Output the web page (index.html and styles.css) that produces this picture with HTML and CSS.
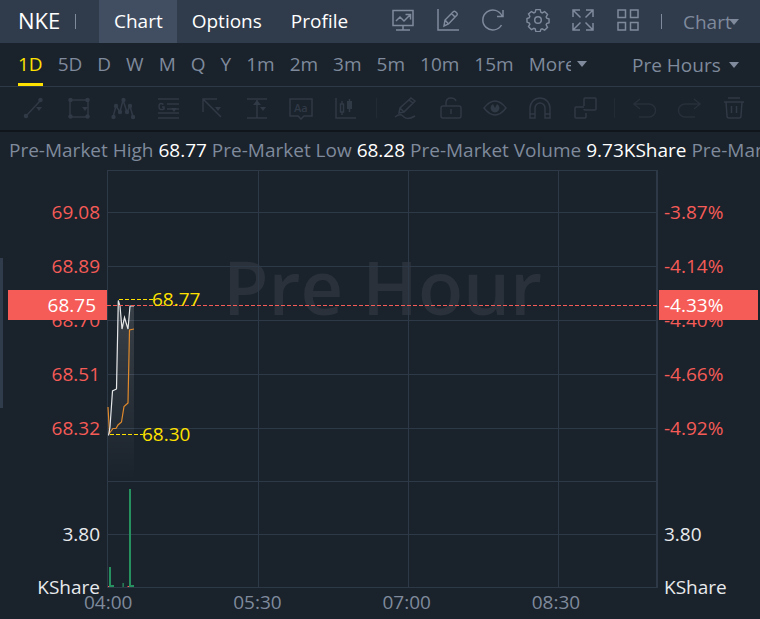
FILE: index.html
```html
<!DOCTYPE html>
<html lang="en">
<head>
  <meta charset="UTF-8">
  <meta name="viewport" content="width=device-width, initial-scale=1.0">
  <title>NKE Chart</title>
  <link rel="stylesheet" href="styles.css">
</head>
<body>
  <header class="header">
    <h1 class="symbol">NKE</h1>
    <span class="divider"></span>
    <nav class="tabs">
      <a class="tab active" href="#chart">Chart</a>
      <a class="tab" href="#options">Options</a>
      <a class="tab" href="#profile">Profile</a>
    </nav>
    <div class="actions">
      <button class="icon-btn" aria-label="Indicators">
        <svg viewBox="0 0 24 24"><path d="M2 2.500h20v15h-20zM12 17.500v4.500M5 22h14M5 13l4-4 4 4 6-6M14.500 6.500h5v5"/></svg>
      </button>
      <button class="icon-btn" aria-label="Draw">
        <svg viewBox="0 0 24 24"><path d="M2 1v21h21M8 18l1-6 8.500-8.500q1-.7 2 .2l1.300 1.300q1 1 .2 2L12.500 16zM9 12l3.500 4M15.500 5.500l3.500 3.500"/></svg>
      </button>
      <button class="icon-btn" aria-label="Refresh">
        <svg viewBox="0 0 24 24"><path d="M20.500 17A10 10 0 1 1 21 8M22 2v6.500h-6"/></svg>
      </button>
      <button class="icon-btn" aria-label="Settings">
        <svg viewBox="0 0 24 24"><path d="M9.800 2h4.400l.8 2.800 1.300.6 2.600-1.400 3 3-1.400 2.600.6 1.400 2.400.8v3.800l-2.400.9-.6 1.300 1.400 2.600-3 3-2.600-1.400-1.300.6-.8 2.400H9.800L9 22l-1.300-.6L5.100 22.800l-3-3 1.400-2.600-.6-1.300-2.400-.9v-3.800l2.400-.8.6-1.400L2.100 6.500l3-2.500 2.600 1.400L9 4.800z" transform="translate(.5 -.3) scale(.96)"/><circle cx="12" cy="12" r="3.300"/></svg>
      </button>
      <button class="icon-btn" aria-label="Full screen">
        <svg viewBox="0 0 24 24"><path d="M2 9V2h7M2.500 2.500l7 7M15 2h7v7M21.500 2.500l-7 7M2 15v7h7M2.500 21.500l7-7M22 15v7h-7M21.500 21.500l-7-7"/></svg>
      </button>
      <button class="icon-btn" aria-label="Layout">
        <svg viewBox="0 0 24 24"><path d="M2 2h7.500v7.500H2zM14.500 2H22v7.500h-7.500zM2 14.500h7.500V22H2zM14.500 14.500H22V22h-7.500z"/></svg>
      </button>
    </div>
    <span class="divider"></span>
    <label class="dropdown chart-type">
      <select aria-label="Chart type"><option>Chart</option></select>
      <svg class="caret" viewBox="0 0 12 8"><path d="M1 1h10L6 7z"/></svg>
    </label>
  </header>

  <div class="periods">
    <button class="period active">1D</button>
    <button class="period">5D</button>
    <button class="period">D</button>
    <button class="period">W</button>
    <button class="period">M</button>
    <button class="period">Q</button>
    <button class="period">Y</button>
    <button class="period">1m</button>
    <button class="period">2m</button>
    <button class="period">3m</button>
    <button class="period">5m</button>
    <button class="period">10m</button>
    <button class="period">15m</button>
    <label class="dropdown more">
      <select aria-label="More periods"><option>More</option></select>
      <svg class="caret" viewBox="0 0 12 8"><path d="M1 1h10L6 7z"/></svg>
    </label>
    <label class="dropdown session">
      <select aria-label="Session"><option>Pre Hours</option></select>
      <svg class="caret" viewBox="0 0 12 8"><path d="M1 1h10L6 7z"/></svg>
    </label>
  </div>

  <div class="toolbar">
    <button class="icon-btn" aria-label="Trend line">
      <svg viewBox="0 0 24 24"><path d="M4 20L18 5"/><g class="solid"><circle cx="4" cy="20" r="2.300"/><circle cx="18.500" cy="4" r="2.300"/><path d="M14 11h6l-3 4z"/></g></svg>
    </button>
    <button class="icon-btn" aria-label="Rectangle">
      <svg viewBox="0 0 24 24"><path d="M3 4h18v17H3z"/><g class="solid"><circle cx="3.500" cy="4" r="2.300"/><circle cx="20.500" cy="4" r="2.300"/><circle cx="3.500" cy="20.500" r="2.300"/><circle cx="20.500" cy="20.500" r="2.300"/><path d="M15 11h6l-3 4z"/></g></svg>
    </button>
    <button class="icon-btn" aria-label="Wave">
      <svg viewBox="0 0 24 24"><path d="M2 21L5 10l4 6 3-12 4 12 3-6 3 11"/><g class="solid"><circle cx="2.500" cy="21" r="2.200"/><circle cx="5" cy="10" r="2.200"/><circle cx="9" cy="16" r="2.200"/><circle cx="12.500" cy="4" r="2.200"/><circle cx="16" cy="16" r="2.200"/><circle cx="19" cy="10" r="2.200"/><circle cx="22" cy="21" r="2.200"/></g></svg>
    </button>
    <button class="icon-btn" aria-label="Gann">
      <svg viewBox="0 0 24 24"><path d="M2 3h21M11 8h12M11 13h12M2 17h21M2 22h21M7.500 8.500Q3 6 3 10.500T8 13v-2H6"/><path class="solid" d="M15 12h6l-3 4z"/></svg>
    </button>
    <button class="icon-btn" aria-label="Arrow">
      <svg viewBox="0 0 24 24"><path d="M3 16V3h14M3 3l18 18"/><path class="solid" d="M15 11h6l-3 4z"/></svg>
    </button>
    <button class="icon-btn" aria-label="Measure">
      <svg viewBox="0 0 24 24"><path d="M2 3h20M2 22h20M12 4v18"/><path class="solid" d="M12 4l4 5H8zM15 11h6l-3 4z"/></svg>
    </button>
    <button class="icon-btn" aria-label="Text note">
      <svg viewBox="0 0 24 24"><path d="M1 3h22v17h-8l-3 3-3-3H1z"/><text x="5" y="16">Aa</text></svg>
    </button>
    <button class="icon-btn" aria-label="Candles">
      <svg viewBox="0 0 24 24"><path d="M2 2v20h20M6.500 8h3v8h-3zM8 5v3M8 16v3M15.500 3v13"/><path class="solid" d="M13 5h5v8h-5z"/></svg>
    </button>
    <span class="tool-divider"></span>
    <button class="icon-btn" aria-label="Freehand">
      <svg viewBox="0 0 24 24"><path d="M5 17l1-5L17 2l4 3-11 11zM6 12l4 4M15 4l4 3M1 21c5-4 7-2 9 0s6 2 11-1"/></svg>
    </button>
    <button class="icon-btn" aria-label="Lock">
      <svg viewBox="0 0 24 24"><rect x="2" y="10" width="20" height="12" rx="2"/><path d="M7 10V7q0-5 5-5 4 0 5 3M12 13v5"/></svg>
    </button>
    <button class="icon-btn" aria-label="Visibility">
      <svg viewBox="0 0 24 24"><path d="M1 12Q12-2 23 12 12 26 1 12z"/><path class="solid" d="M10 8a4.500 4.500 0 1 0 4 0l-2 4z"/></svg>
    </button>
    <button class="icon-btn" aria-label="Magnet">
      <svg viewBox="0 0 24 24"><path d="M2 22V12a10 10 0 0 1 20 0v10h-5V12a5 5 0 0 0-10 0v10zM2 18h5M17 18h5"/></svg>
    </button>
    <button class="icon-btn" aria-label="Overlap">
      <svg viewBox="0 0 24 24"><path d="M11 10V3q0-1 1-1h10q1 0 1 1v10q0 1-1 1H12q-1 0-1-1M8 11H3q-1 0-1 1v9q0 1 1 1h9q1 0 1-1v-4M8 11h3"/></svg>
    </button>
    <span class="tool-divider"></span>
    <button class="icon-btn faint" aria-label="Undo">
      <svg viewBox="0 0 24 24"><path d="M7 3L1 8l6 5M1 8h15a6.500 6.500 0 0 1 0 13H6"/></svg>
    </button>
    <button class="icon-btn faint" aria-label="Redo">
      <svg viewBox="0 0 24 24"><path d="M17 3l6 5-6 5M23 8H8a6.500 6.500 0 0 0 0 13h10"/></svg>
    </button>
    <button class="icon-btn" aria-label="Delete">
      <svg viewBox="0 0 24 24"><path d="M6 2h12M2 6h20M4 6l1 14q0 2 2 2h10q2 0 2-2l1-14M9.500 10v7M14.500 10v7"/></svg>
    </button>
  </div>

  <main>
    <p class="summary">
      Pre-Market High <b>68.77</b> Pre-Market Low <b>68.28</b> Pre-Market Volume <b>9.73KShare</b> Pre-Market Turnover
    </p>

    <section class="chart">
      <div class="axis axis-left">
        <span>69.08</span>
        <span>68.89</span>
        <span>68.70</span>
        <span>68.51</span>
        <span>68.32</span>
        <span class="volume">3.80</span>
        <span class="unit">KShare</span>
        <span class="price-tag">68.75</span>
      </div>

      <div class="plot">
        <div class="watermark">Pre Hour</div>
        <svg class="graph" viewBox="0 0 551 418" preserveAspectRatio="none">
          <defs>
            <linearGradient id="area" x1="0" y1="0" x2="0" y2="1">
              <stop offset="0" stop-color="#fff" stop-opacity=".14"/>
              <stop offset="1" stop-color="#fff" stop-opacity="0"/>
            </linearGradient>
          </defs>
          <path class="grid" d="M.5.500H550.500M0 42.500H550M0 96.500H550M0 150.500H550M0 204.500H550M0 258.500H550M0 311.500H550M0 364.500H550M0 417.500H550M.5 0V418M151.500 0V418M301.500 0V418M451.500 0V418M549.500 0V418M550.500 0V418"/>
          <path fill="url(#area)" d="M1 265L3 258 5 222 9 219 11 131 13 140 15 159 18 148 21 159 23 136H27V310H1z"/>
          <path class="line average" d="M1 237L2.500 263 6 258.500H9L11 255 14.500 252 17 236.500 21 233 22.500 160 27 159"/>
          <path class="line price" d="M1.500 265.500L3 257 5.500 221 9.500 219 11.300 130.500 13 136 15 159 17.500 147.500 21 159 23 136H27"/>
          <path class="last" d="M0 135.500H550"/>
          <path class="callout" d="M12 129.500H46M3 264.500H36"/>
          <path class="up" d="M2 397h2v20H2zM4 415h3v2H4zM15.500 413h1.300v4h-1.300zM22 319h2v98h-2zM24 415h3v2h-3z"/>
          <path class="down" d="M1 416h1v1H1zM20.500 416h1.500v1h-1.500z"/>
        </svg>
        <span class="extreme high">68.77</span>
        <span class="extreme low">68.30</span>
        <div class="times">
          <span>04:00</span>
          <span>05:30</span>
          <span>07:00</span>
          <span>08:30</span>
        </div>
      </div>

      <div class="axis axis-right">
        <span>-3.87%</span>
        <span>-4.14%</span>
        <span>-4.40%</span>
        <span>-4.66%</span>
        <span>-4.92%</span>
        <span class="volume">3.80</span>
        <span class="unit">KShare</span>
        <span class="price-tag">-4.33%</span>
      </div>
    </section>
    <div class="scroll-handle"></div>
  </main>
</body>
</html>
```

FILE: styles.css
```css
:root {
  --bg: #1a222b;
  --header: #303b4c;
  --active: #414d61;
  --muted: #7f8a9c;
  --grid: #2e3948;
  --yellow: #ffe100;
  --red: #f55b57;
  --tool: #303946;
}
* {
  box-sizing: border-box;
}
body {
  margin: 0;
  min-height: 100vh;
  background: var(--bg);
  color: var(--muted);
  font-family: "Open Sans", "Noto Sans", sans-serif;
  font-size: 19px;
  line-height: 26px;
  overflow-x: hidden;
}
button,
select {
  font: inherit;
  color: inherit;
  background: none;
  border: 0;
  padding: 0;
  margin: 0;
  cursor: pointer;
}
svg {
  display: block;
  fill: none;
  stroke: currentColor;
}

/* header */
.header {
  display: flex;
  align-items: center;
  height: 43px;
  padding: 0 20px 0 18px;
  background: var(--header);
}
.symbol {
  margin: 0 15px 0 0;
  padding-bottom: 4px;
  width: 42px;
  color: #fff;
  font-size: 22px;
  font-weight: 400;
}
.divider {
  width: 1px;
  height: 15px;
  background: var(--muted);
}
.tabs {
  display: flex;
  align-self: stretch;
  margin-left: 23px;
}
.tab {
  display: flex;
  align-items: center;
  padding: 0 14px 2px 15px;
  color: #fff;
  text-decoration: none;
}
.tab.active {
  background: var(--active);
}
.actions {
  display: flex;
  gap: 21px;
  margin: 0 21px 0 auto;
  padding-bottom: 3px;
}
.icon-btn {
  width: 24px;
  height: 24px;
}
.icon-btn svg {
  width: 24px;
  height: 24px;
  stroke-width: 1.5;
}
.dropdown {
  display: flex;
  align-items: center;
}
.dropdown select {
  appearance: none;
  height: 26px;
  overflow: hidden;
  text-overflow: clip;
}
.dropdown option {
  background: var(--bg);
}
.caret {
  width: 12px;
  height: 8px;
  fill: currentColor;
  stroke: none;
  pointer-events: none;
}
.chart-type {
  margin-left: 21px;
}
.chart-type select {
  width: 49px;
  margin-right: -4px;
}

/* periods */
.periods {
  display: flex;
  gap: 15px;
  height: 44px;
  padding: 0 20px 0 18px;
  border-bottom: 1px solid var(--grid);
}
.period {
  padding-top: 2px;
  border-bottom: 3px solid transparent;
  white-space: nowrap;
}
.period.active {
  color: var(--yellow);
  border-color: var(--yellow);
}
.more {
  padding-bottom: 2px;
}
.more select {
  width: 42px;
  margin-right: 5px;
}
.session {
  margin-left: auto;
}
.session select {
  width: 90px;
  margin-right: 6px;
}

/* drawing tools */
.toolbar {
  display: flex;
  align-items: center;
  justify-content: space-between;
  height: 45px;
  padding: 0 14px 1px 22px;
  color: var(--tool);
  border-bottom: 2px solid #10151b;
}
.toolbar .solid {
  fill: currentColor;
  stroke: none;
}
.toolbar text {
  font-size: 11px;
  font-weight: 600;
  fill: currentColor;
  stroke: none;
}
.tool-divider {
  width: 1px;
  height: 20px;
  margin: 0 -3px;
  background: #222a34;
}
.faint {
  color: #272f3a;
}

/* chart */
main {
  position: relative;
}
.summary {
  margin: 0;
  padding: 5px 0 7px 9px;
  white-space: nowrap;
  overflow: hidden;
}
.summary b {
  color: #fff;
  font-weight: 400;
}
.chart {
  display: grid;
  grid-template-columns: 107px 1fr 102px;
}
.axis {
  position: relative;
  display: flex;
  flex-direction: column;
  padding-top: 15px;
  color: var(--red);
  line-height: 54px;
}
.axis-left {
  padding-right: 7px;
  text-align: right;
}
.axis-right {
  padding-left: 6px;
}
.axis .volume {
  margin-top: 52px;
  color: #e8eaed;
}
.axis .unit {
  color: #e8eaed;
  line-height: 52px;
}
.price-tag {
  position: absolute;
  top: 120px;
  left: 8px;
  right: 0;
  padding-right: 11px;
  background: var(--red);
  color: #fff;
  line-height: 30px;
}
.axis-right .price-tag {
  left: 1px;
  right: 2px;
  padding-left: 5px;
}
.plot {
  position: relative;
}
.graph {
  position: relative;
  width: 100%;
  height: 418px;
}
.graph path {
  vector-effect: non-scaling-stroke;
  stroke: none;
}
.graph .grid {
  stroke: var(--grid);
}
.graph .line {
  stroke-width: 1.2;
}
.graph .price {
  stroke: #e4e6e8;
}
.graph .average {
  stroke: #e08a2c;
}
.graph .last {
  stroke: var(--red);
  stroke-dasharray: 4 2;
}
.graph .callout {
  stroke: var(--yellow);
  stroke-dasharray: 4 2;
}
.graph .up {
  fill: #27905f;
}
.graph .down {
  fill: var(--red);
}
.watermark {
  position: absolute;
  top: 80px;
  left: 0;
  right: 0;
  color: #2a313b;
  font-size: 74px;
  font-weight: 600;
  line-height: 74px;
  text-align: center;
  white-space: nowrap;
}
.extreme {
  position: absolute;
  color: var(--yellow);
}
.high {
  top: 116px;
  left: 45px;
}
.low {
  top: 251px;
  left: 35px;
}
.times {
  display: grid;
  grid-template-columns: repeat(3, 26%) 1fr;
  margin-left: -23px;
  padding-top: 1px;
}
.scroll-handle {
  position: absolute;
  top: 126px;
  left: 0;
  width: 3px;
  height: 150px;
  background: var(--header);
}
```
